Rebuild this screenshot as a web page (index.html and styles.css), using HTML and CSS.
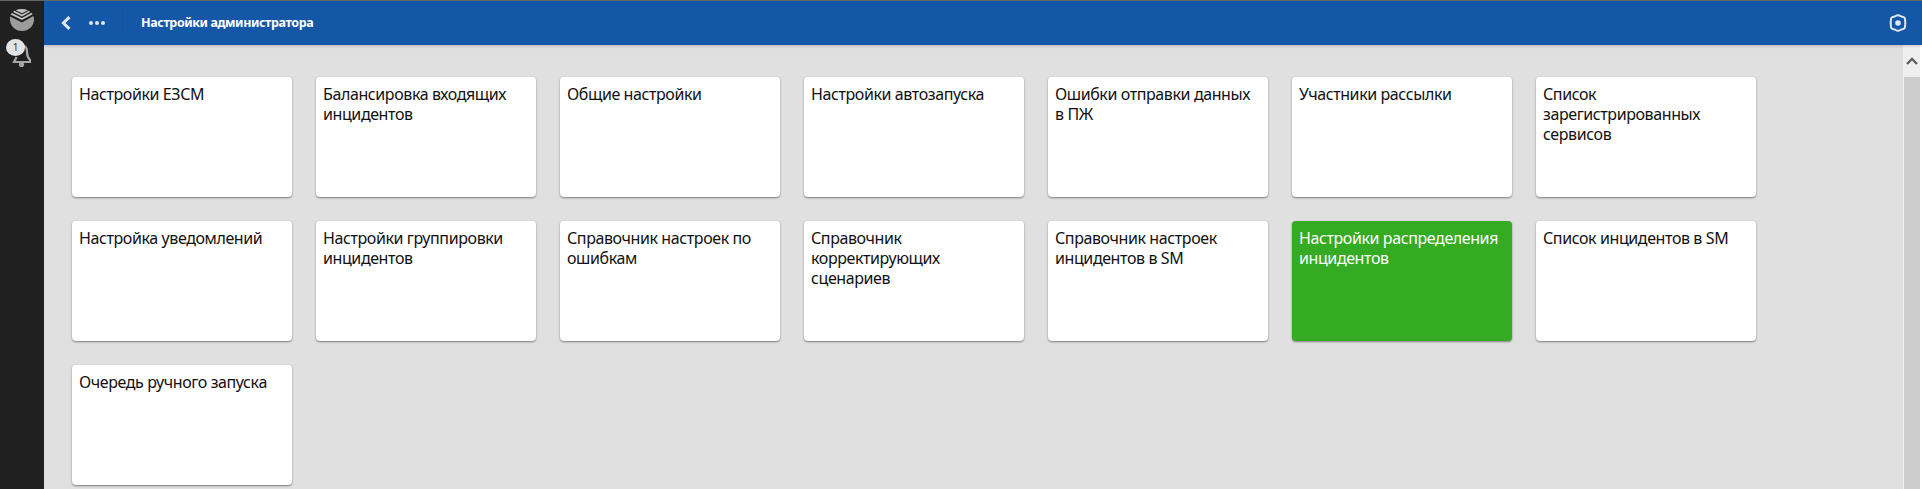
FILE: index.html
```html
<!DOCTYPE html>
<html lang="ru">
<head>
    <meta charset="UTF-8">
    <link rel="stylesheet" href="styles.css">
    <title>Настройки администратора</title>
</head>
<body>
    <div class="side-bar">
        <svg class="logo" width="24" height="22" viewBox="0 0 24 22">
            <path d="M0 7.5 L12 13.5 L23.4 7 C23.8 8 24 9.2 24 10.4 C24 16.8 18.6 22 12 22 C5.4 22 0 16.8 0 10.4 Z" fill="#9c9c9c"/>
            <path d="M0.6 5.4 L12 11 L22.6 5.2 L21.4 3.8 L12 9 L2 4 Z" fill="#c2c2c2"/>
            <path d="M3 3 L12 7.4 L20.2 2.8 L18.8 1.8 L12 5.4 L4.4 1.8 Z" fill="#c2c2c2"/>
            <path d="M5.6 1.2 L12 4.2 L17.8 1.2 C14 -0.4 9.4 -0.4 5.6 1.2 Z" fill="#c2c2c2"/>
        </svg>
        <div class="bell-box">
            <svg class="bell" width="20" height="26" viewBox="0 0 20 26">
                <path d="M9 3 C13 3 15 6 15 10 C15 14 16 16 18 18 L18 20 L2 20 C3 18 4 17 4.5 15" fill="none" stroke="#a6a6a6" stroke-width="2.2"/>
                <circle cx="9.5" cy="22.5" r="2.6" fill="#a6a6a6"/>
            </svg>
            <span class="badge">1</span>
        </div>
    </div>
    <div class="main">
        <div class="header">
            <div class="header-left">
                <svg class="back" width="10" height="14" viewBox="0 0 10 14">
                    <path d="M8.4 1.2 L2.4 7 L8.4 12.8" fill="none" stroke="#dfe8f4" stroke-width="3"/>
                </svg>
                <div class="dots"><span></span><span></span><span></span></div>
            </div>
            <div class="title">Настройки администратора</div>
            <div class="header-right">
                <svg width="18" height="18" viewBox="0 0 18 18">
                    <path d="M9 1.2 C10.6 1.2 11.4 2.2 12.6 2.6 C13.8 3 15 2.9 15.7 4.1 C16.4 5.3 15.9 6.4 16.2 7.6 C16.4 8.6 16.4 9.4 16.2 10.4 C15.9 11.6 16.4 12.7 15.7 13.9 C15 15.1 13.8 15 12.6 15.4 C11.4 15.8 10.6 16.8 9 16.8 C7.4 16.8 6.6 15.8 5.4 15.4 C4.2 15 3 15.1 2.3 13.9 C1.6 12.7 2.1 11.6 1.8 10.4 C1.6 9.4 1.6 8.6 1.8 7.6 C2.1 6.4 1.6 5.3 2.3 4.1 C3 2.9 4.2 3 5.4 2.6 C6.6 2.2 7.4 1.2 9 1.2 Z" fill="none" stroke="#dfe8f4" stroke-width="2"/>
                    <circle cx="9" cy="9" r="2.8" fill="#dfe8f4"/>
                </svg>
            </div>
        </div>
        <div class="body-row">
            <div class="content">
                <div class="card">Настройки ЕЗСМ</div>
                <div class="card">Балансировка входящих инцидентов</div>
                <div class="card">Общие настройки</div>
                <div class="card">Настройки автозапуска</div>
                <div class="card">Ошибки отправки данных в ПЖ</div>
                <div class="card">Участники рассылки</div>
                <div class="card">Список зарегистрированных сервисов</div>
                <div class="card">Настройка уведомлений</div>
                <div class="card">Настройки группировки инцидентов</div>
                <div class="card">Справочник настроек по ошибкам</div>
                <div class="card">Справочник корректирующих сценариев</div>
                <div class="card">Справочник настроек инцидентов в SM</div>
                <div class="card card-active">Настройки распределения инцидентов</div>
                <div class="card">Список инцидентов в SM</div>
                <div class="card">Очередь ручного запуска</div>
            </div>
            <div class="scroll">
                <div class="scroll-btn">
                    <svg width="12" height="8" viewBox="0 0 12 8">
                        <path d="M1 7 L6 2 L11 7" fill="none" stroke="#606060" stroke-width="2.4"/>
                    </svg>
                </div>
                <div class="scroll-thumb"></div>
            </div>
        </div>
    </div>
</body>
</html>
```

FILE: styles.css
```css
html, body{
    height: 100%;
}
body{
    margin: 0;
    padding: 0;
    display: flex;
    overflow: hidden;
    background-color: #fff;
    font-family: "Noto Sans", "Open Sans", sans-serif;
}
.side-bar{
    width: 44px;
    flex-shrink: 0;
    background-color: #202020;
    border-top: 1px solid #666;
    display: flex;
    flex-direction: column;
    align-items: center;
}
.logo{
    margin-top: 8px;
}
.bell-box{
    position: relative;
    width: 44px;
    height: 32px;
    margin-top: 8px;
}
.bell{
    position: absolute;
    left: 12px;
    top: 3px;
}
.badge{
    position: absolute;
    left: 6px;
    top: 0;
    width: 19px;
    height: 17px;
    border-radius: 50%;
    background-color: #e4e4e4;
    color: #333;
    font-size: 10px;
    line-height: 17px;
    text-align: center;
}
.main{
    flex: 1;
    min-width: 0;
    display: flex;
    flex-direction: column;
}
.header{
    height: 44px;
    flex-shrink: 0;
    display: flex;
    align-items: center;
    background-color: #1557a7;
    border-top: 1px solid #666;
    box-shadow: 0 1px 3px rgba(0, 0, 0, 0.2);
    color: #fff;
    position: relative;
}
.header-left{
    width: 79px;
    height: 24px;
    display: flex;
    align-items: center;
    border-right: 1px solid #1a5097;
    box-sizing: border-box;
    padding-left: 17px;
    gap: 18px;
}
.dots{
    display: flex;
    gap: 2px;
}
.dots span{
    width: 4px;
    height: 4px;
    border-radius: 50%;
    background-color: #dfe8f4;
}
.title{
    margin-left: 18px;
    margin-bottom: 2px;
    font-size: 12.5px;
    font-weight: bold;
    letter-spacing: -0.4px;
}
.header-right{
    margin-left: auto;
    width: 49px;
    height: 24px;
    border-left: 1px solid #1a5097;
    box-sizing: border-box;
    display: flex;
    align-items: center;
    justify-content: center;
}
.body-row{
    flex: 1;
    min-height: 0;
    display: flex;
}
.content{
    flex: 1;
    min-width: 0;
    background-color: #e0e0e0;
    padding: 32px 28px 0;
    display: flex;
    flex-wrap: wrap;
    align-content: flex-start;
    gap: 24px;
    overflow: hidden;
}
.card{
    width: 220px;
    height: 120px;
    box-sizing: border-box;
    padding: 7px;
    background-color: #fff;
    border-radius: 4px;
    box-shadow: 0 1px 2px rgba(0, 0, 0, 0.45);
    color: #111;
    font-size: 16px;
    line-height: 20px;
    letter-spacing: -0.4px;
}
.card-active{
    background-color: #35aa23;
    color: #fff;
}
.scroll{
    width: 19px;
    box-sizing: border-box;
    display: flex;
    flex-direction: column;
    background-color: #efefef;
    border-right: 2px solid #fff;
}
.scroll-btn{
    height: 32px;
    flex-shrink: 0;
    display: flex;
    align-items: center;
    justify-content: center;
}
.scroll-thumb{
    flex: 1;
    margin-left: 1px;
    background-color: #cdcdcd;
}
```
